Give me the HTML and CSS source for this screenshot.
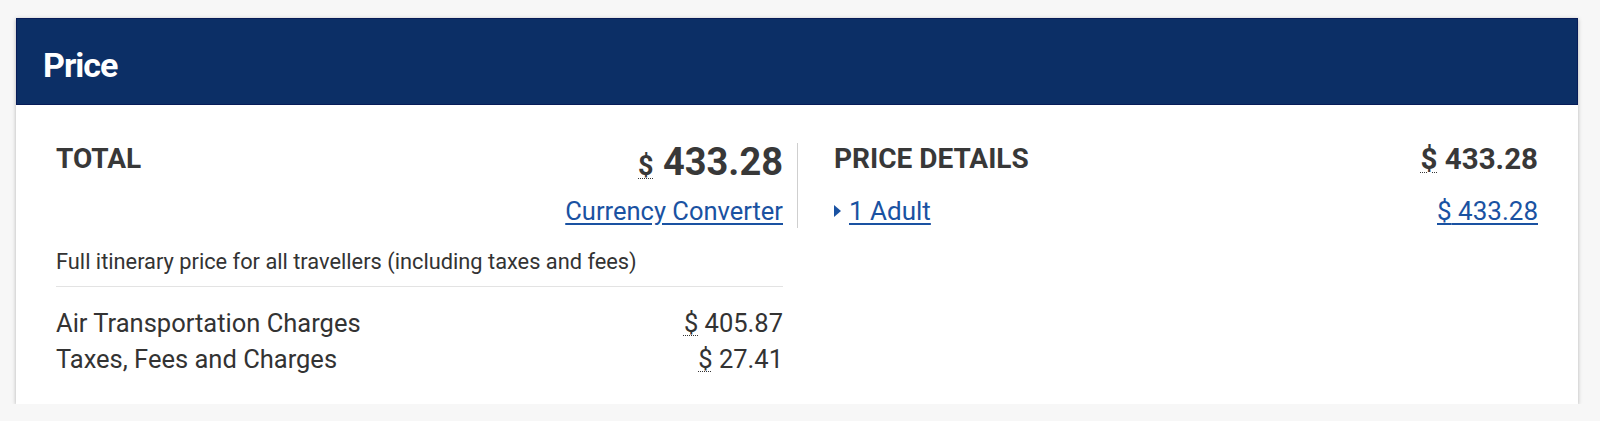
FILE: index.html
```html
<!DOCTYPE html>
<html lang="en">
<head>
<meta charset="utf-8">
<title>Price</title>
<link rel="stylesheet" href="styles.css">
</head>
<body>
<section class="card">
  <header class="card-head"><h2 class="card-title">Price</h2></header>
  <div class="card-body">
    <div class="summary">
      <div class="total-block">
        <div class="row-top">
          <h3 class="label">TOTAL</h3>
          <div class="big-price"><abbr class="cur cur-big" title="US Dollar">$</abbr> 433.28</div>
        </div>
        <div class="row-link"><a class="link" href="#">Currency Converter</a></div>
      </div>
      <div class="details-block">
        <div class="row-top">
          <h3 class="label">PRICE DETAILS</h3>
          <div class="mid-price"><abbr class="cur" title="US Dollar">$</abbr> 433.28</div>
        </div>
        <div class="row-adult">
          <a class="link adult" href="#"><span class="caret"></span><span class="adult-text">1 Adult</span></a>
          <a class="link" href="#"><abbr class="cur" title="US Dollar">$</abbr> 433.28</a>
        </div>
      </div>
    </div>
    <div class="breakdown">
      <p class="note">Full itinerary price for all travellers (including taxes and fees)</p>
      <ul class="lines">
        <li class="line"><span>Air Transportation Charges</span><span><abbr class="cur" title="US Dollar">$</abbr> 405.87</span></li>
        <li class="line"><span>Taxes, Fees and Charges</span><span><abbr class="cur" title="US Dollar">$</abbr> 27.41</span></li>
      </ul>
    </div>
  </div>
</section>
</body>
</html>
```

FILE: styles.css
```css
* { box-sizing: border-box; }
html, body { margin: 0; padding: 0; }
body {
  background: #f7f7f7;
  font-family: Roboto, "Liberation Sans", Arial, sans-serif;
  color: #333;
  padding: 18px 22px 0 16px;
}
.card {
  width: 1562px;
  background: #fff;
  box-shadow: 0 1px 4px rgba(0,0,0,0.28);
}
.card-head {
  height: 87px;
  background: #0c2f66;
  border: 1px solid #071c58;
  padding: 26px 0 0 26px;
}
.card-title {
  margin: 0;
  color: #fff;
  font-weight: 700;
  font-size: 34px;
  line-height: 40px;
  letter-spacing: -1px;
}
.card-body {
  padding: 38px 40px 27px 40px;
}
.summary {
  display: grid;
  grid-template-columns: 742px 1fr;
}
.total-block {
  border-right: 1px solid #cfcfcf;
  padding-right: 14px;
  padding-bottom: 2px;
}
.details-block {
  padding-left: 36px;
}
.row-top {
  display: flex;
  justify-content: space-between;
  align-items: flex-start;
}
.label {
  margin: 0;
  font-size: 28px;
  line-height: 32px;
  font-weight: 700;
  color: #383838;
}
.big-price {
  font-size: 38px;
  line-height: 38px;
  font-weight: 700;
  color: #383838;
}
.cur {
  text-decoration: underline dotted;
  text-decoration-thickness: 1px;
  text-underline-offset: 3px;
}
.cur-big { font-size: 27px; line-height: 1; }
.mid-price {
  font-size: 29.5px;
  line-height: 32px;
  font-weight: 700;
  color: #383838;
}
.row-link {
  display: flex;
  justify-content: flex-end;
  margin-top: 15px;
  font-size: 25.5px;
  line-height: 30px;
}
.link {
  color: #1a52a2;
  text-decoration: underline;
  text-underline-offset: 3px;
}
.row-adult {
  display: flex;
  justify-content: space-between;
  margin-top: 21px;
  font-size: 26px;
  line-height: 30px;
}
.adult { display: flex; align-items: center; }
.caret {
  width: 0; height: 0;
  border-top: 6px solid transparent;
  border-bottom: 6px solid transparent;
  border-left: 7px solid #1a52a2;
  margin-right: 8px;
}
.breakdown {
  width: 727px;
}
.note {
  margin: 20px 0 0 0;
  font-size: 21.8px;
  line-height: 28px;
  padding-bottom: 10px;
  border-bottom: 1px solid #e3e3e3;
}
.lines {
  list-style: none;
  margin: 18px 0 0 0;
  padding: 0;
}
.line {
  display: flex;
  justify-content: space-between;
  font-size: 25.5px;
  line-height: 36px;
}
```
